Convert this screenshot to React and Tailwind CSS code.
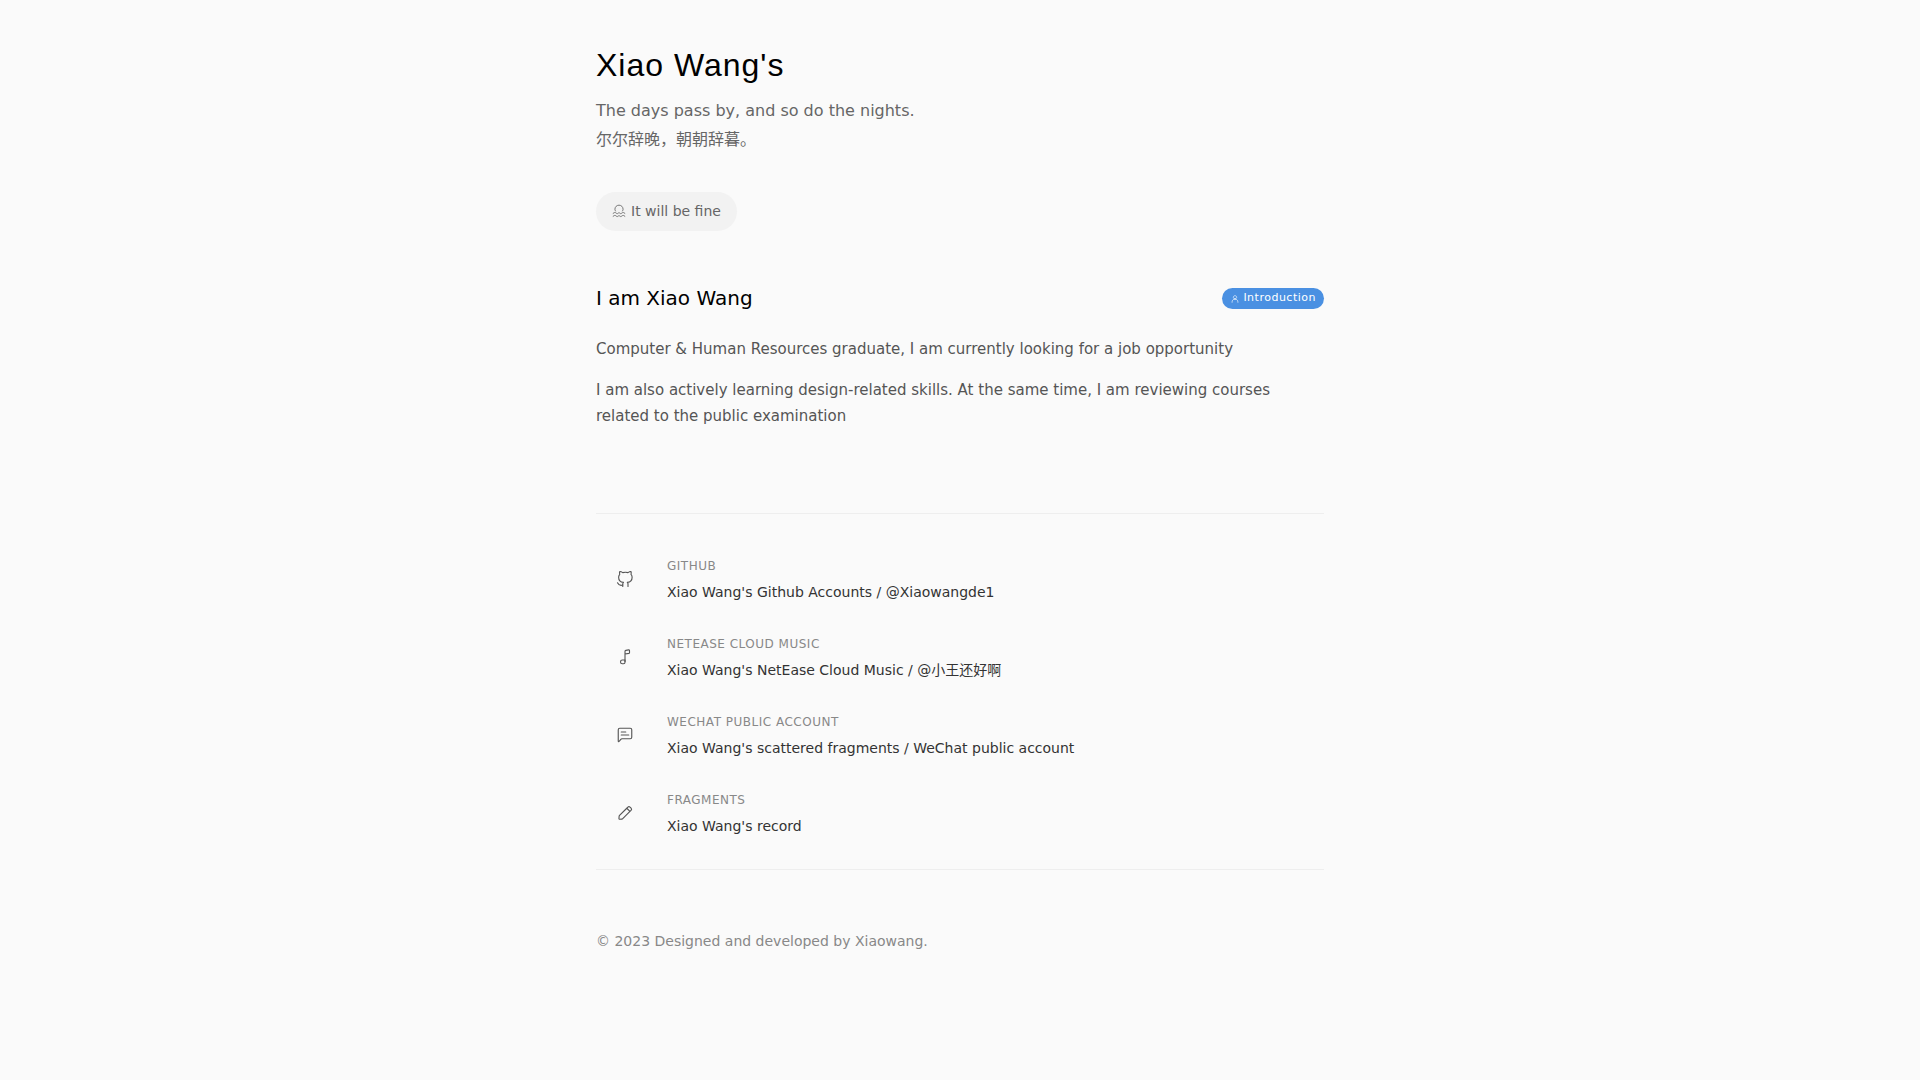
const links = [
    { icon: 'github', label: 'Github', text: "Xiao Wang's Github Accounts / @Xiaowangde1" },
    { icon: 'music', label: 'NetEase Cloud Music', text: "Xiao Wang's NetEase Cloud Music / @小王还好啊" },
    { icon: 'message', label: 'WeChat public account', text: "Xiao Wang's scattered fragments / WeChat public account" },
    { icon: 'pencil', label: 'Fragments', text: "Xiao Wang's record" },
];

const iconPaths = {
    github: [
        'M16 22.027V19.157C16.0375 18.68 15.973 18.2006 15.811 17.7506C15.6489 17.3006 15.3929 16.8902 15.06 16.547C18.2 16.197 21.5 15.007 21.5 9.547C21.4998 8.1508 20.9627 6.80812 20 5.797C20.4558 4.5753 20.4236 3.22514 19.91 2.027C19.91 2.027 18.73 1.677 16 3.507C13.708 2.88584 11.292 2.88584 9 3.507C6.27 1.677 5.09 2.027 5.09 2.027C4.57638 3.22514 4.54424 4.5753 5 5.797C4.03013 6.81565 3.49252 8.17054 3.5 9.577C3.5 14.997 6.8 16.187 9.94 16.577C9.611 16.9169 9.35726 17.3226 9.19531 17.767C9.03335 18.2114 8.96681 18.6849 9 19.157V22.027',
        'M9 20.027C6 20.999 3.5 20.027 2 17.027',
    ],
    music: [
        'M12 18V4.5C12 3.8 12.4 3.2 13.1 3.1L16.8 2.5C17.4 2.4 18 2.9 18 3.5V6.2C18 6.7 17.6 7.1 17.2 7.2L12 8',
        'M12 16V19C12 20.1 11.1 21 10 21H8.5C7.1 21 6 19.9 6 18.5C6 17.1 7.1 16 8.5 16H12',
    ],
    message: [
        'M3 20.2895V5C3 3.89543 3.89543 3 5 3H19C20.1046 3 21 3.89543 21 5V15C21 16.1046 20.1046 17 19 17H7.96125C7.35368 17 6.77906 17.2762 6.39951 17.7506L4.06852 20.6643C3.71421 21.1072 3 20.8567 3 20.2895Z',
        'M7 8H13',
        'M7 12H17',
    ],
    pencil: [
        'M14.3632 5.65156L15.8431 4.17157C16.6242 3.39052 17.8905 3.39052 18.6716 4.17157L20.0858 5.58579C20.8668 6.36683 20.8668 7.63316 20.0858 8.41421L18.6058 9.8942M14.3632 5.65156L4.74749 15.2672C4.41542 15.5993 4.21079 16.0376 4.16947 16.5054L3.92738 19.2459C3.87261 19.8659 4.39148 20.3848 5.0115 20.33L7.75191 20.0879C8.21972 20.0466 8.65806 19.8419 8.99013 19.5099L18.6058 9.8942M14.3632 5.65156L18.6058 9.8942',
    ],
    sea: [
        'M2 16L4 14.8C4.7 14.4 5.3 14.4 6 14.8L8 16.2C8.6 16.6 9.4 16.6 10 16.2L11 15.4C11.6 15 12.4 15 13 15.4L14 16.2C14.6 16.6 15.4 16.6 16 16.2L18 14.8C18.7 14.4 19.3 14.4 20 14.8L22 16',
        'M2 21L4 19.8C4.7 19.4 5.3 19.4 6 19.8L8 21.2C8.6 21.6 9.4 21.6 10 21.2L11 20.4C11.6 20 12.4 20 13 20.4L14 21.2C14.6 21.6 15.4 21.6 16 21.2L18 19.8C18.7 19.4 19.3 19.4 20 19.8L22 21',
        'M6 12C5.3 11 5 10 5 9C5 5.1 8.1 2 12 2C15.9 2 19 5.1 19 9C19 10 18.7 11 18 12',
    ],
    user: [
        'M5 20V19C5 15.134 8.13401 12 12 12C15.866 12 19 15.134 19 19V20',
        'M12 12C14.2091 12 16 10.2091 16 8C16 5.79086 14.2091 4 12 4C9.79086 4 8 5.79086 8 8C8 10.2091 9.79086 12 12 12Z',
    ],
};

function Icon({ name, size }) {
    return (
        <svg
            width={size}
            height={size}
            viewBox="0 0 24 24"
            fill="none"
            stroke="currentColor"
            strokeWidth="1.5"
            strokeLinecap="round"
            strokeLinejoin="round"
            className="shrink-0"
            aria-hidden="true"
        >
            {iconPaths[name].map(d => <path key={d} d={d} />)}
        </svg>
    );
}

export default function App() {
    return (
        <div className="min-h-screen bg-[#fafafa] px-6 font-['DejaVu_Sans','Noto_Sans_CJK_SC',sans-serif]">
            <div className="mx-auto max-w-[728px] pt-[41px] pb-16">
                <header>
                    <h1 className="font-['Liberation_Sans',sans-serif] text-[32px] leading-[48px] tracking-[1px] text-black">Xiao Wang's</h1>
                    <p className="mt-[7px] text-base leading-[29px] text-[#666]">
                        The days pass by, and so do the nights.<br />
                        <span lang="zh-CN">尔尔辞晚，朝朝辞暮。</span>
                    </p>
                    <button type="button" className="mt-[38px] flex h-[39px] items-center gap-[5px] rounded-full bg-[#f2f2f2] px-4 pb-px text-sm text-[#666]">
                        <Icon name="sea" size={14} />
                        It will be fine
                    </button>
                </header>

                <main>
                    <section className="mt-[53px]">
                        <div className="flex items-center justify-between">
                            <h2 className="text-xl leading-[29px] text-black">I am Xiao Wang</h2>
                            <span className="flex h-[21px] items-center gap-[3px] rounded-full bg-[#4a90e2] px-2 text-[11px] tracking-[0.5px] text-white">
                                <Icon name="user" size={10} />
                                Introduction
                            </span>
                        </div>
                        <div className="mt-[23px] space-y-[15px] text-[15px] leading-[26px] text-[#555]">
                            <p>Computer &amp; Human Resources graduate, I am currently looking for a job opportunity</p>
                            <p>I am also actively learning design-related skills. At the same time, I am reviewing courses related to the public examination</p>
                        </div>
                    </section>

                    <nav className="mt-[84px] border-y border-[#eee] pt-[26px] pb-[17px]">
                        {links.map(link => (
                            <a key={link.icon} href="#" className="flex h-[78px] items-center gap-[33px] pl-5 text-[#555]">
                                <Icon name={link.icon} size={18} />
                                <span>
                                    <span className="block text-xs leading-[26px] tracking-[0.5px] text-[#888] uppercase">{link.label}</span>
                                    <span className="block text-sm leading-[26px] text-[#333]">{link.text}</span>
                                </span>
                            </a>
                        ))}
                    </nav>
                </main>

                <footer className="mt-[61px] text-sm text-[#888]">© 2023 Designed and developed by Xiaowang.</footer>
            </div>
        </div>
    );
}
